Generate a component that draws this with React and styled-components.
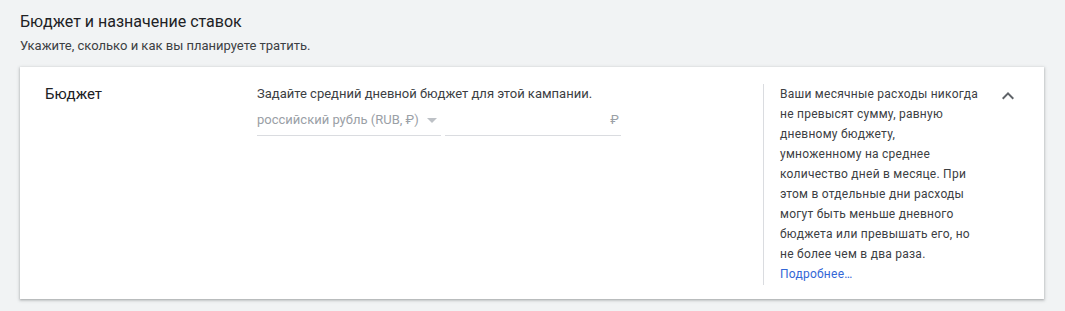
import styled, { createGlobalStyle } from "styled-components";

const GlobalStyle = createGlobalStyle`
  body {
    margin: 0;
    background: #f1f3f4;
    font-family: Roboto, "Noto Sans", Arial, sans-serif;
    color: #202124;
  }
`;

const Page = styled.div`
  padding: 10px 20px 12px 20px;
`;

const Title = styled.h2`
  margin: 0;
  font-size: 16px;
  font-weight: 400;
  line-height: 24px;
  color: #202124;
`;

const Subtitle = styled.p`
  margin: 2px 0 0 0;
  font-size: 13px;
  line-height: 20px;
  color: #3c4043;
`;

const Card = styled.section`
  margin-top: 11px;
  width: 1024px;
  height: 232px;
  box-sizing: border-box;
  background: #fff;
  box-shadow: 0 1px 2px rgba(60, 64, 67, 0.3), 0 1px 3px 1px rgba(60, 64, 67, 0.15);
  display: grid;
  grid-template-columns: 237px 506px 1fr;
  padding: 17px 0 14px 0;
`;

const Label = styled.div`
  padding: 0 0 0 25px;
  font-size: 15px;
  line-height: 20px;
  color: #202124;
`;

const Middle = styled.div`
  display: flex;
  flex-direction: column;
`;

const Hint = styled.div`
  font-size: 13px;
  line-height: 20px;
  color: #3c4043;
`;

const Fields = styled.div`
  display: flex;
  gap: 4px;
  margin-top: 6px;
`;

const Field = styled.div`
  width: ${(p) => p.$width}px;
  height: 26px;
  box-sizing: border-box;
  border-bottom: 1px solid #dadce0;
  display: flex;
  align-items: flex-start;
  justify-content: ${(p) => (p.$end ? "flex-end" : "flex-start")};
  padding-right: ${(p) => (p.$end ? "2px" : "0")};
  font-size: 13px;
  line-height: 20px;
  color: #9aa0a6;
`;

const Arrow = styled.span`
  margin: 8px 0 0 8px;
  width: 0;
  height: 0;
  border-left: 5px solid transparent;
  border-right: 5px solid transparent;
  border-top: 5px solid #bdc1c6;
`;

const Side = styled.aside`
  border-left: 1px solid #dadce0;
  padding: 0 0 0 16px;
  display: flex;
  justify-content: space-between;
`;

const Help = styled.div`
  width: 210px;
  white-space: nowrap;
  font-size: 12px;
  line-height: 20px;
  letter-spacing: 0.25px;
  color: #3c4043;
`;

const More = styled.a`
  color: #3367d6;
  text-decoration: none;
`;

const Toggle = styled.button`
  border: 0;
  background: none;
  padding: 0;
  width: 24px;
  height: 24px;
  margin: 0 24px 0 0;
  display: flex;
  align-items: flex-start;
  justify-content: center;
  cursor: pointer;
`;

const helpLines = [
  "Ваши месячные расходы никогда",
  "не превысят сумму, равную",
  "дневному бюджету,",
  "умноженному на среднее",
  "количество дней в месяце. При",
  "этом в отдельные дни расходы",
  "могут быть меньше дневного",
  "бюджета или превышать его, но",
  "не более чем в два раза.",
];

export default function App() {
  return (
    <Page>
      <GlobalStyle />
      <Title>Бюджет и назначение ставок</Title>
      <Subtitle>Укажите, сколько и как вы планируете тратить.</Subtitle>
      <Card>
        <Label>Бюджет</Label>
        <Middle>
          <Hint>Задайте средний дневной бюджет для этой кампании.</Hint>
          <Fields>
            <Field $width={184}>
              российский рубль (RUB, ₽)
              <Arrow />
            </Field>
            <Field $width={176} $end>
              ₽
            </Field>
          </Fields>
        </Middle>
        <Side>
          <Help>
            {helpLines.map((line) => (
              <div key={line}>{line}</div>
            ))}
            <More href="#">Подробнее…</More>
          </Help>
          <Toggle aria-label="Свернуть">
            <svg width="24" height="24" viewBox="0 0 24 24">
              <path
                d="M7.41 15.41 12 10.83l4.59 4.58L18 14l-6-6-6 6z"
                fill="#5f6368"
              />
            </svg>
          </Toggle>
        </Side>
      </Card>
    </Page>
  );
}
